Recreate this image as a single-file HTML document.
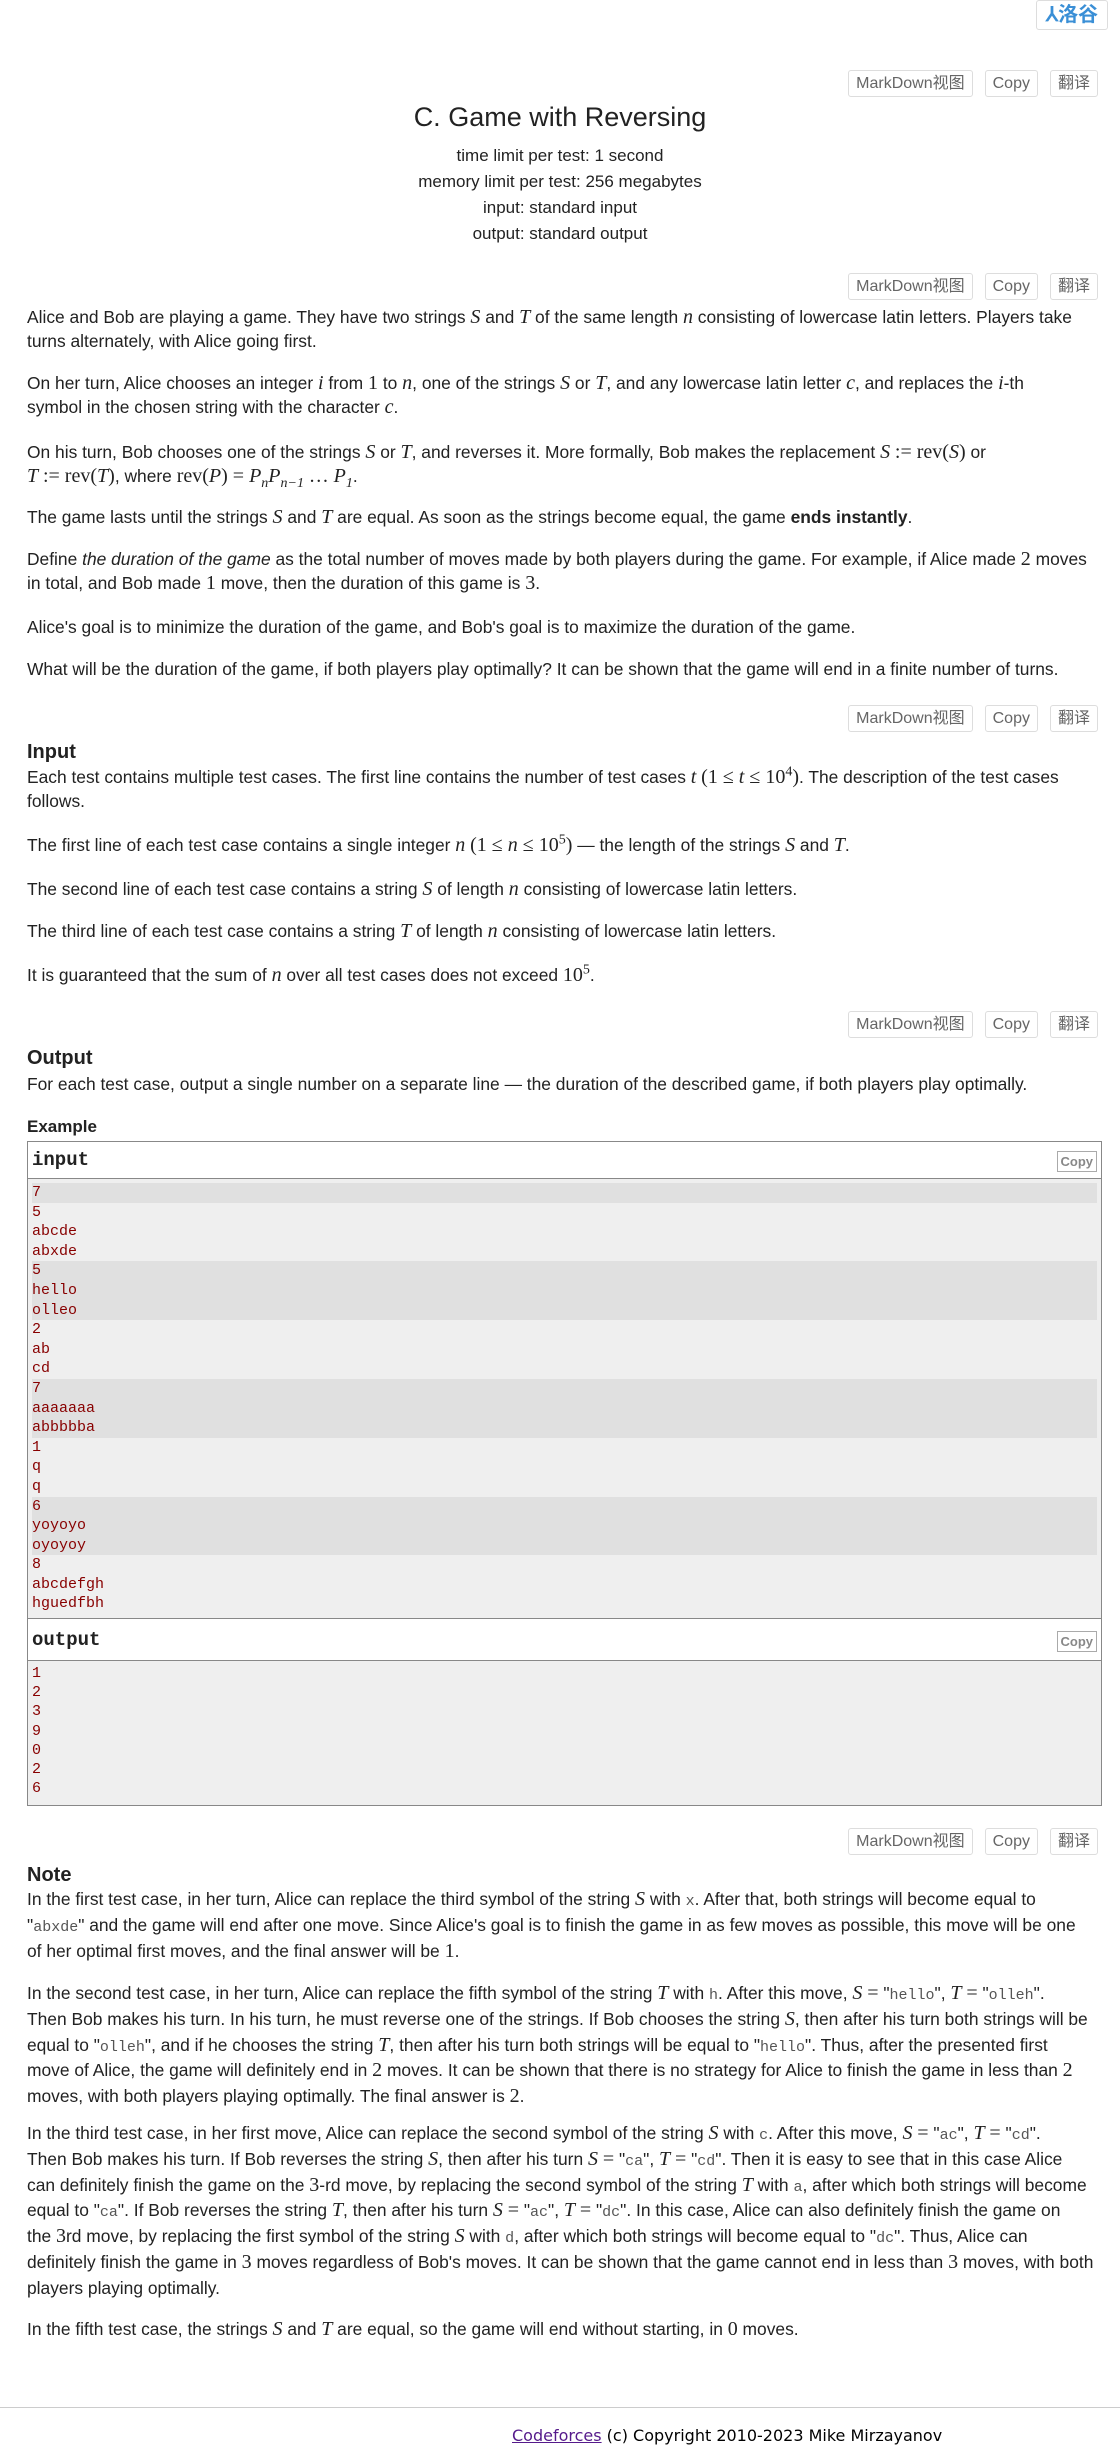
<!DOCTYPE html>
<html><head><meta charset="utf-8"><style>
*{margin:0;padding:0;box-sizing:border-box}
body{width:1120px;height:2448px;position:relative;background:#fff;font-family:"Liberation Sans","Noto Sans CJK SC",sans-serif;color:#222;font-size:17.4px;overflow:hidden}
.a{position:absolute}
.p{position:absolute;left:27px;white-space:nowrap;line-height:24px}
.n{line-height:25.8px}
.m{font-family:"Liberation Serif",serif;font-style:italic;font-size:20px;line-height:0}
.r{font-family:"Liberation Serif",serif;font-size:20px;line-height:0}
.t{font-family:"Liberation Mono",monospace;font-size:15px;color:#555;line-height:0}
sup,sub{line-height:0;font-size:0.7em}
.btns{position:absolute;right:22px;height:27px;display:flex;gap:12px}
.btns span{border:1px solid #ddd;border-radius:3px;color:#666;font-size:16px;line-height:25px;padding:0 7px;background:#fff}
.c{position:absolute;left:0;width:1120px;text-align:center}
h3{position:absolute;left:27px;font-size:20px;font-weight:bold;line-height:24px}
.box{position:absolute;left:27px;width:1075px;border:1px solid #888}
.hd{height:37px;border-bottom:1px solid #888;font-family:"Liberation Mono",monospace;font-weight:bold;font-size:19px;line-height:37px;padding-left:4px;position:relative}
.cp{position:absolute;right:4px;top:9px;border:1px solid #aaa;font-family:"Liberation Sans",sans-serif;font-weight:bold;font-size:13px;color:#888;line-height:19px;padding:0 3px;background:#fff}
.ct{background:#efefef;padding:4px;font-family:"Liberation Mono",monospace;font-size:15px;color:#800;line-height:19.6px}
.d{background:#e0e0e0}
</style></head><body>
<div class="a" style="left:1036px;top:0;width:72px;height:30px;border:1px solid #ddd;border-radius:3px;color:#3a8fd6;font-size:20px;font-weight:bold;line-height:28px;text-align:center">⅄洛谷</div>

<div class="btns" style="top:70px"><span>MarkDown视图</span><span>Copy</span><span>翻译</span></div>
<div class="c" style="top:101px;font-size:27px;line-height:32px">C. Game with Reversing</div>
<div class="c" style="top:143px;font-size:17px;line-height:26px">time limit per test: 1 second<br>memory limit per test: 256 megabytes<br>input: standard input<br>output: standard output</div>

<div class="btns" style="top:273px"><span>MarkDown视图</span><span>Copy</span><span>翻译</span></div>
<div class="p" style="top:305px">Alice and Bob are playing a game. They have two strings <span class="m">S</span> and <span class="m">T</span> of the same length <span class="m">n</span> consisting of lowercase latin letters. Players take<br>turns alternately, with Alice going first.</div>
<div class="p" style="top:371px">On her turn, Alice chooses an integer <span class="m">i</span> from <span class="r">1</span> to <span class="m">n</span>, one of the strings <span class="m">S</span> or <span class="m">T</span>, and any lowercase latin letter <span class="m">c</span>, and replaces the <span class="m">i</span>-th<br>symbol in the chosen string with the character <span class="m">c</span>.</div>
<div class="p" style="top:440px">On his turn, Bob chooses one of the strings <span class="m">S</span> or <span class="m">T</span>, and reverses it. More formally, Bob makes the replacement <span class="m">S</span> <span class="r">:= rev(</span><span class="m">S</span><span class="r">)</span> or<br><span class="m">T</span> <span class="r">:= rev(</span><span class="m">T</span><span class="r">)</span>, where <span class="r">rev(</span><span class="m">P</span><span class="r">) = </span><span class="m">P<sub>n</sub>P<sub>n−1</sub></span> <span class="r">…</span> <span class="m">P<sub>1</sub></span>.</div>
<div class="p" style="top:505px">The game lasts until the strings <span class="m">S</span> and <span class="m">T</span> are equal. As soon as the strings become equal, the game <b>ends instantly</b>.</div>
<div class="p" style="top:547px">Define <i>the duration of the game</i> as the total number of moves made by both players during the game. For example, if Alice made <span class="r">2</span> moves<br>in total, and Bob made <span class="r">1</span> move, then the duration of this game is <span class="r">3</span>.</div>
<div class="p" style="top:615px">Alice's goal is to minimize the duration of the game, and Bob's goal is to maximize the duration of the game.</div>
<div class="p" style="top:657px">What will be the duration of the game, if both players play optimally? It can be shown that the game will end in a finite number of turns.</div>

<div class="btns" style="top:705px"><span>MarkDown视图</span><span>Copy</span><span>翻译</span></div>
<h3 style="top:740px">Input</h3>
<div class="p" style="top:765px">Each test contains multiple test cases. The first line contains the number of test cases <span class="m">t</span> <span class="r">(1 ≤ </span><span class="m">t</span><span class="r"> ≤ 10<sup>4</sup>)</span>. The description of the test cases<br>follows.</div>
<div class="p" style="top:833px">The first line of each test case contains a single integer <span class="m">n</span> <span class="r">(1 ≤ </span><span class="m">n</span><span class="r"> ≤ 10<sup>5</sup>)</span> — the length of the strings <span class="m">S</span> and <span class="m">T</span>.</div>
<div class="p" style="top:877px">The second line of each test case contains a string <span class="m">S</span> of length <span class="m">n</span> consisting of lowercase latin letters.</div>
<div class="p" style="top:919px">The third line of each test case contains a string <span class="m">T</span> of length <span class="m">n</span> consisting of lowercase latin letters.</div>
<div class="p" style="top:963px">It is guaranteed that the sum of <span class="m">n</span> over all test cases does not exceed <span class="r">10<sup>5</sup></span>.</div>

<div class="btns" style="top:1011px"><span>MarkDown视图</span><span>Copy</span><span>翻译</span></div>
<h3 style="top:1046px">Output</h3>
<div class="p" style="top:1072px">For each test case, output a single number on a separate line — the duration of the described game, if both players play optimally.</div>
<div class="a" style="left:27px;top:1117px;font-weight:bold;font-size:17px">Example</div>

<div class="box" style="top:1141px">
<div class="hd">input<span class="cp">Copy</span></div>
<div class="ct" style="height:439px">
<div class="d">7</div>
<div>5<br>abcde<br>abxde</div>
<div class="d">5<br>hello<br>olleo</div>
<div>2<br>ab<br>cd</div>
<div class="d">7<br>aaaaaaa<br>abbbbba</div>
<div>1<br>q<br>q</div>
<div class="d">6<br>yoyoyo<br>oyoyoy</div>
<div>8<br>abcdefgh<br>hguedfbh</div>
</div>
<div class="hd" style="border-top:1px solid #888;height:43px;line-height:43px">output<span class="cp" style="top:12px">Copy</span></div>
<div class="ct" style="height:144px;padding-top:3px;line-height:19.2px">1<br>2<br>3<br>9<br>0<br>2<br>6</div>
</div>

<div class="btns" style="top:1828px"><span>MarkDown视图</span><span>Copy</span><span>翻译</span></div>
<h3 style="top:1863px">Note</h3>
<div class="p n" style="top:1887px">In the first test case, in her turn, Alice can replace the third symbol of the string <span class="m">S</span> with <span class="t">x</span>. After that, both strings will become equal to<br>"<span class="t">abxde</span>" and the game will end after one move. Since Alice's goal is to finish the game in as few moves as possible, this move will be one<br>of her optimal first moves, and the final answer will be <span class="r">1</span>.</div>
<div class="p n" style="top:1981px">In the second test case, in her turn, Alice can replace the fifth symbol of the string <span class="m">T</span> with <span class="t">h</span>. After this move, <span class="m">S</span> <span class="r">=</span> "<span class="t">hello</span>", <span class="m">T</span> <span class="r">=</span> "<span class="t">olleh</span>".<br>Then Bob makes his turn. In his turn, he must reverse one of the strings. If Bob chooses the string <span class="m">S</span>, then after his turn both strings will be<br>equal to "<span class="t">olleh</span>", and if he chooses the string <span class="m">T</span>, then after his turn both strings will be equal to "<span class="t">hello</span>". Thus, after the presented first<br>move of Alice, the game will definitely end in <span class="r">2</span> moves. It can be shown that there is no strategy for Alice to finish the game in less than <span class="r">2</span><br>moves, with both players playing optimally. The final answer is <span class="r">2</span>.</div>
<div class="p n" style="top:2121px">In the third test case, in her first move, Alice can replace the second symbol of the string <span class="m">S</span> with <span class="t">c</span>. After this move, <span class="m">S</span> <span class="r">=</span> "<span class="t">ac</span>", <span class="m">T</span> <span class="r">=</span> "<span class="t">cd</span>".<br>Then Bob makes his turn. If Bob reverses the string <span class="m">S</span>, then after his turn <span class="m">S</span> <span class="r">=</span> "<span class="t">ca</span>", <span class="m">T</span> <span class="r">=</span> "<span class="t">cd</span>". Then it is easy to see that in this case Alice<br>can definitely finish the game on the <span class="r">3</span>-rd move, by replacing the second symbol of the string <span class="m">T</span> with <span class="t">a</span>, after which both strings will become<br>equal to "<span class="t">ca</span>". If Bob reverses the string <span class="m">T</span>, then after his turn <span class="m">S</span> <span class="r">=</span> "<span class="t">ac</span>", <span class="m">T</span> <span class="r">=</span> "<span class="t">dc</span>". In this case, Alice can also definitely finish the game on<br>the <span class="r">3</span>rd move, by replacing the first symbol of the string <span class="m">S</span> with <span class="t">d</span>, after which both strings will become equal to "<span class="t">dc</span>". Thus, Alice can<br>definitely finish the game in <span class="r">3</span> moves regardless of Bob's moves. It can be shown that the game cannot end in less than <span class="r">3</span> moves, with both<br>players playing optimally.</div>
<div class="p n" style="top:2317px">In the fifth test case, the strings <span class="m">S</span> and <span class="m">T</span> are equal, so the game will end without starting, in <span class="r">0</span> moves.</div>

<div class="a" style="left:0;top:2407px;width:1120px;height:1px;background:#ccc"></div>
<div class="a" style="left:512px;top:2425px;font-family:'DejaVu Sans',sans-serif;font-size:16px;line-height:22px;white-space:nowrap;color:#000"><span style="color:#551a8b;text-decoration:underline">Codeforces</span> (c) Copyright 2010-2023 Mike Mirzayanov</div>
</body></html>
